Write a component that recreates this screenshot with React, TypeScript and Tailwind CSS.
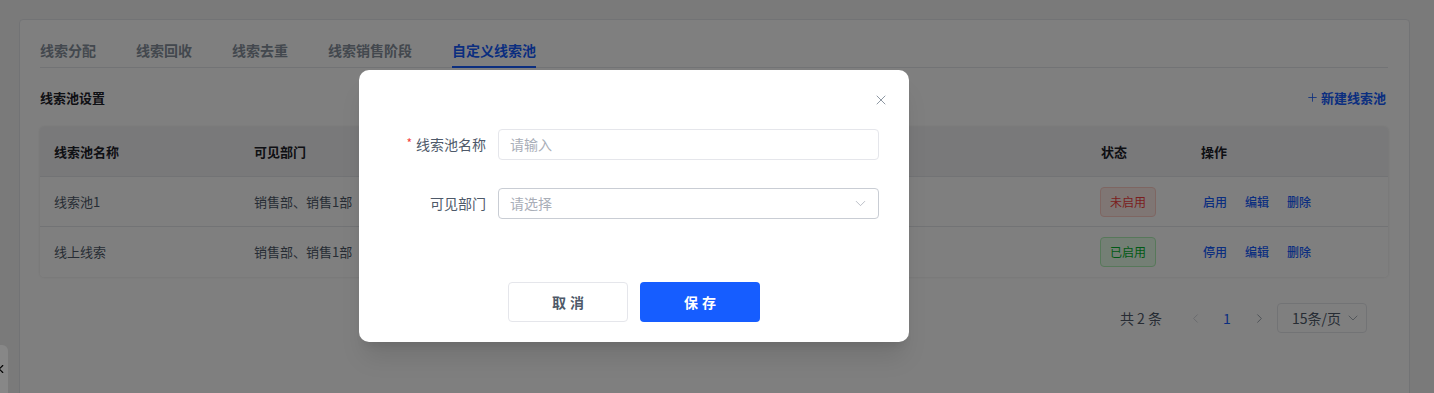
import { Plus, ChevronLeft, ChevronRight, ChevronDown, X } from 'lucide-react';

const tabs = ['线索分配', '线索回收', '线索去重', '线索销售阶段', '自定义线索池'];

const rows = [
    { name: '线索池1', dept: '销售部、销售1部', enabled: false },
    { name: '线上线索', dept: '销售部、销售1部', enabled: true },
];

const cols = 'grid grid-cols-[200px_1fr_100px_201px]';

function PoolTable() {
    return (
        <div className="rounded-[4px] overflow-hidden shadow-[0_0_3px_rgba(0,0,0,0.12)]">
            <div className={`${cols} h-[50px] items-center bg-[#f2f3f5] text-[13px] font-bold text-[#1d2129] border-b border-[#e5e6eb]`}>
                <div className="px-[14px]">线索池名称</div>
                <div className="px-[14px]">可见部门</div>
                <div className="px-[14px]">状态</div>
                <div className="px-[14px]">操作</div>
            </div>
            {rows.map((row, i) => (
                <div
                    key={row.name}
                    className={`${cols} h-[50px] items-center bg-white text-[13px] text-[#4e5969] ${i === 0 ? 'border-b border-[#e5e6eb]' : ''}`}
                >
                    <div className="px-[14px]">{row.name}</div>
                    <div className="px-[14px]">{row.dept}</div>
                    <div className="px-[13px]">
                        {row.enabled ? (
                            <span className="inline-flex h-[30px] items-center rounded-[4px] border border-[#aff0b5] bg-[#e8ffea] px-[9px] text-[12px] text-[#00b42a]">已启用</span>
                        ) : (
                            <span className="inline-flex h-[30px] items-center rounded-[4px] border border-[#fdcdc5] bg-[#ffece8] px-[9px] text-[12px] text-[#f53f3f]">未启用</span>
                        )}
                    </div>
                    <div className="flex gap-[18px] pl-[16px] text-[12px] font-medium text-[#165dff]">
                        <span>{row.enabled ? '停用' : '启用'}</span>
                        <span>编辑</span>
                        <span>删除</span>
                    </div>
                </div>
            ))}
        </div>
    );
}

function Pagination() {
    return (
        <div className="mt-[25px] flex items-center justify-end pr-[21px] text-[14px] text-[#4e5969]">
            <span className="mr-[17px]">共&nbsp;2&nbsp;条</span>
            <span className="flex h-8 w-8 items-center justify-center text-[#c9cdd4]"><ChevronLeft size={15} strokeWidth={1.3} /></span>
            <span className="flex h-8 w-8 items-center justify-center text-[#165dff]">1</span>
            <span className="flex h-8 w-8 items-center justify-center text-[#86909c]"><ChevronRight size={15} strokeWidth={1.3} /></span>
            <div className="ml-[2px] flex h-[30px] w-[90px] items-center justify-between rounded-[4px] border border-[#e5e6eb] pl-[14px] pr-[5px]">
                <span>15条/页</span>
                <ChevronDown size={16} strokeWidth={1.1} className="text-[#86909c]" />
            </div>
        </div>
    );
}

function PoolModal() {
    return (
        <div className="absolute left-[359px] top-[70px] z-20 w-[550px] rounded-[10px] bg-white pb-[20px] pl-[30px] pr-[30px] pt-[59px] shadow-xl">
            <button className="absolute right-[20px] top-[22px] text-[#86909c]">
                <X size={16} strokeWidth={1.4} />
            </button>

            <div className="flex items-center gap-[12px]">
                <label className="flex w-[97px] items-center justify-end text-[14px] text-[#4e5969]">
                    <span className="mr-[4px] -mt-[4px] text-[12px] text-[#f53f3f]">*</span>
                    线索池名称
                </label>
                <div className="flex h-[31px] flex-1 items-center rounded-[4px] border border-[#e5e6eb] px-[11px] text-[14px] text-[#a9aeb8]">
                    请输入
                </div>
            </div>

            <div className="mt-[28px] flex items-center gap-[12px]">
                <label className="w-[97px] text-right text-[14px] text-[#4e5969]">可见部门</label>
                <div className="flex h-[31px] flex-1 items-center justify-between rounded-[4px] border border-[#c9cdd4] pl-[11px] pr-[9px] text-[14px] text-[#a9aeb8]">
                    <span>请选择</span>
                    <ChevronDown size={17} strokeWidth={1.1} className="text-[#a9aeb8]" />
                </div>
            </div>

            <div className="mt-[63px] flex justify-center gap-[12px]">
                <button className="h-[40px] w-[120px] rounded-[4px] border border-[#e5e6eb] bg-white text-[14px] font-semibold tracking-[4px] text-[#4e5969]">
                    <span className="mr-[-4px]">取消</span>
                </button>
                <button className="h-[40px] w-[120px] rounded-[4px] bg-[#165dff] text-[14px] font-semibold tracking-[4px] text-white">
                    <span className="mr-[-4px]">保存</span>
                </button>
            </div>
        </div>
    );
}

export default function App() {
    return (
        <div className="relative h-[393px] w-full overflow-hidden bg-[#f5f5f5] font-['Noto_Sans_CJK_SC',sans-serif]">
            <div className="pl-[19px] pr-[24px] pt-[19px]">
                <div className="h-[420px] rounded-[4px] border border-[#e5e6eb] bg-white pl-[20px] pr-[21px]">
                    {/* Tabs */}
                    <div className="flex gap-[40px] border-b border-[#e5e6eb] pt-[19px]">
                        {tabs.map((t, i) => (
                            <div
                                key={t}
                                className={`-mb-px border-b-2 pb-[5px] text-[14px] font-semibold leading-[22px] ${i === tabs.length - 1 ? 'border-[#165dff] text-[#165dff]' : 'border-transparent text-[#86909c]'}`}
                            >
                                {t}
                            </div>
                        ))}
                    </div>

                    <div className="flex h-[59px] items-center justify-between">
                        <div className="text-[13px] font-bold text-[#1d2129]">线索池设置</div>
                        <div className="flex items-center gap-[2px] pr-[2px] text-[13px] font-semibold text-[#165dff]">
                            <Plus size={13} strokeWidth={1.5} />
                            新建线索池
                        </div>
                    </div>

                    <PoolTable />
                    <Pagination />
                </div>
            </div>

            {/* mask */}
            <div className="absolute inset-0 z-10 bg-black/50" />

            <PoolModal />

            {/* side collapse handle */}
            <div className="absolute bottom-0 left-0 z-20 flex h-[48px] w-[8px] items-center rounded-tr-[6px] bg-white/10">
                <ChevronLeft size={16} strokeWidth={2} className="-ml-[6px] text-black" />
            </div>
        </div>
    );
}
